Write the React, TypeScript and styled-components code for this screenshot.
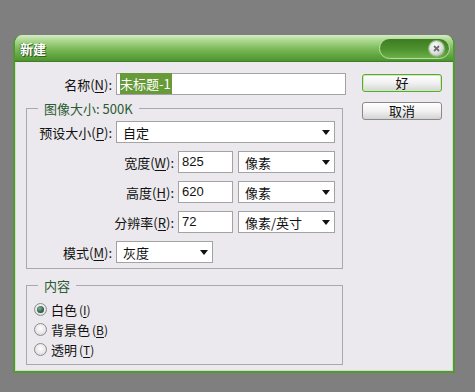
import styled, { createGlobalStyle } from "styled-components";

const GlobalStyle = createGlobalStyle`
  html, body {
    margin: 0;
    padding: 0;
    background: #7f7f7f;
  }
  body {
    font-family: "Noto Sans CJK SC", "Liberation Sans", sans-serif;
    font-size: 13px;
    color: #111;
  }
`;

const Page = styled.div`
  width: 475px;
  height: 392px;
  padding: 35px 0 0 13px;
  box-sizing: border-box;
`;

const Dialog = styled.div`
  width: 442px;
  height: 338px;
  box-sizing: border-box;
  border: 2px solid #55963a;
  border-top: none;
  border-radius: 9px 9px 0 0;
  background: #ebe9ed;
  box-shadow: inset 1px 0 0 #c6e6b4, inset -1px 0 0 #c6e6b4, inset 0 -1px 0 #c6e6b4;
  display: flex;
  flex-direction: column;
  overflow: hidden;
`;

const TitleBar = styled.div`
  height: 27px;
  margin: 0 -2px;
  display: flex;
  align-items: center;
  padding: 0 5px 0 7px;
  border-radius: 9px 9px 0 0;
  background: linear-gradient(
    180deg,
    #d6ecc6 0%,
    #a9d68c 22%,
    #7dbb5c 50%,
    #5ea43e 78%,
    #4b8f2d 100%
  );
  box-shadow: inset 0 -1px 0 #3f7d26;
`;

const Title = styled.span`
  color: #fff;
  font-weight: 700;
  font-size: 13px;
  line-height: 16px;
  text-shadow: 1px 1px 0 #2e5f1c, -1px 0 0 #3d7626;
`;

const TitleControl = styled.div`
  margin-left: auto;
  width: 71px;
  height: 21px;
  border-radius: 11px;
  box-sizing: border-box;
  border: 1px solid #b7e09e;
  background: linear-gradient(180deg, #3d7c22 0%, #4f922f 55%, #6bb049 100%);
  display: flex;
  align-items: center;
  justify-content: flex-end;
  padding-right: 5px;
`;

const CloseButton = styled.div`
  width: 15px;
  height: 15px;
  border-radius: 50%;
  background: radial-gradient(circle at 40% 35%, #ffffff 0%, #dcdcdc 55%, #9a9a9a 100%);
  box-shadow: 0 0 0 1px #8fb97a;
  display: flex;
  align-items: center;
  justify-content: center;
`;

const Body = styled.div`
  display: flex;
  gap: 16px;
  padding: 11px 11px 0 11px;
`;

const FormColumn = styled.div`
  display: flex;
  flex-direction: column;
  width: 320px;
`;

const ButtonColumn = styled.div`
  display: flex;
  flex-direction: column;
  gap: 10px;
  padding-top: 1px;
`;

const DialogButton = styled.div<{ $default?: boolean }>`
  width: 80px;
  height: 18px;
  box-sizing: border-box;
  border-radius: 3px;
  border: 1px solid ${({ $default }) => ($default ? "#5ea63a" : "#8a8a8a")};
  box-shadow: ${({ $default }) =>
    $default ? "inset 0 0 0 1px #c9eeb2" : "inset 0 1px 0 #ffffff"};
  background: linear-gradient(180deg, #ffffff 0%, #f1f1f1 50%, #d4d4d4 100%);
  display: flex;
  align-items: center;
  justify-content: center;
  font-size: 13px;
  line-height: 14px;
`;

const Row = styled.div<{ $top?: number }>`
  display: flex;
  align-items: center;
  gap: 4px;
  height: 22px;
  margin-top: ${({ $top }) => $top ?? 0}px;
`;

const Label = styled.span<{ $width: number }>`
  width: ${({ $width }) => $width}px;
  text-align: right;
  line-height: 15px;
  white-space: nowrap;
  u {
    text-decoration: underline;
    text-underline-offset: 2px;
  }
`;

const TextField = styled.div<{ $width: number }>`
  width: ${({ $width }) => $width}px;
  height: 22px;
  box-sizing: border-box;
  border: 1px solid #a3a3a3;
  background: #fff;
  padding: 2px 3px 0;
  line-height: 15px;
  font-family: "Liberation Sans", "Noto Sans CJK SC", sans-serif;
  font-size: 13px;
`;

const Highlight = styled.span`
  background: #679a38;
  color: #fff;
  font-family: "Noto Sans CJK SC", sans-serif;
  padding: 1px 1px 1px 0;
`;

const Select = styled.div<{ $width: number }>`
  width: ${({ $width }) => $width}px;
  height: 22px;
  box-sizing: border-box;
  border: 1px solid #a3a3a3;
  background: #fff;
  display: flex;
  align-items: center;
  padding: 0 4px 0 6px;
  line-height: 15px;
  &::after {
    content: "";
    margin-left: auto;
    border-left: 4px solid transparent;
    border-right: 4px solid transparent;
    border-top: 5px solid #111;
  }
`;

const Group = styled.fieldset<{ $top: number }>`
  margin: ${({ $top }) => $top}px 0 0;
  width: 317px;
  box-sizing: border-box;
  border: 1px solid #a9a9ab;
  padding: 5px 7px 5px 0;
  min-width: 0;
`;

const Legend = styled.legend`
  margin-left: 11px;
  padding: 0 6px;
  line-height: 15px;
  color: #2c5b34;
  font-size: 13px;
`;

const FieldLine = styled.div`
  display: flex;
  align-items: center;
  gap: 5px;
`;

const RadioList = styled.div`
  display: flex;
  flex-direction: column;
  padding: 1px 0 0 7px;
`;

const RadioRow = styled.div`
  display: flex;
  align-items: center;
  gap: 4px;
  height: 20px;
  line-height: 15px;
  font-size: 13px;
  u {
    text-decoration: underline;
    text-underline-offset: 2px;
  }
`;

const Hotkey = styled.span`
  margin-left: 2px;
  font-size: 12px;
`;

const RadioDot = styled.span<{ $checked?: boolean }>`
  width: 13px;
  height: 13px;
  box-sizing: border-box;
  border-radius: 50%;
  border: 1px solid #8d8d8d;
  background: radial-gradient(circle at 50% 40%, #ffffff 0%, #e6e6e6 60%, #c4c4c4 100%);
  display: flex;
  align-items: center;
  justify-content: center;
  &::after {
    content: "";
    display: ${({ $checked }) => ($checked ? "block" : "none")};
    width: 7px;
    height: 7px;
    border-radius: 50%;
    background: radial-gradient(circle at 40% 35%, #7fb39a 0%, #2f6048 60%, #1c3b2b 100%);
  }
`;

const sizeRows = [
  { label: "宽度", key: "W", value: "825", unit: "像素" },
  { label: "高度", key: "H", value: "620", unit: "像素" },
  { label: "分辨率", key: "R", value: "72", unit: "像素/英寸" },
];

const contents = [
  { label: "白色", key: "I", checked: true },
  { label: "背景色", key: "B" },
  { label: "透明", key: "T" },
];

const App = () => {
  return (
    <>
      <GlobalStyle />
      <Page>
        <Dialog>
          <TitleBar>
            <Title>新建</Title>
            <TitleControl>
              <CloseButton>
                <svg width="7" height="7" viewBox="0 0 7 7">
                  <path d="M1 1 L6 6 M6 1 L1 6" stroke="#6f6f6f" strokeWidth="1.8" />
                </svg>
              </CloseButton>
            </TitleControl>
          </TitleBar>
          <Body>
            <FormColumn>
              <Row>
                <Label $width={86}>
                  名称(<u>N</u>):
                </Label>
                <TextField $width={230}>
                  <Highlight>未标题-1</Highlight>
                </TextField>
              </Row>
              <Group $top={6}>
                <Legend>图像大小: 500K</Legend>
                <Row>
                  <Label $width={85}>
                    预设大小(<u>P</u>):
                  </Label>
                  <Select $width={219}>自定</Select>
                </Row>
                {sizeRows.map((r) => (
                  <Row $top={8} key={r.key}>
                    <Label $width={147}>
                      {r.label}(<u>{r.key}</u>):
                    </Label>
                    <FieldLine>
                      <TextField $width={55}>{r.value}</TextField>
                      <Select $width={97}>{r.unit}</Select>
                    </FieldLine>
                  </Row>
                ))}
                <Row $top={8}>
                  <Label $width={85}>
                    模式(<u>M</u>):
                  </Label>
                  <Select $width={97}>灰度</Select>
                </Row>
              </Group>
              <Group $top={9}>
                <Legend>内容</Legend>
                <RadioList>
                  {contents.map((c) => (
                    <RadioRow key={c.key}>
                      <RadioDot $checked={c.checked} />
                      <span>
                        {c.label}
                        <Hotkey>
                          (<u>{c.key}</u>)
                        </Hotkey>
                      </span>
                    </RadioRow>
                  ))}
                </RadioList>
              </Group>
            </FormColumn>
            <ButtonColumn>
              <DialogButton $default>好</DialogButton>
              <DialogButton>取消</DialogButton>
            </ButtonColumn>
          </Body>
        </Dialog>
      </Page>
    </>
  );
};

export default App;
